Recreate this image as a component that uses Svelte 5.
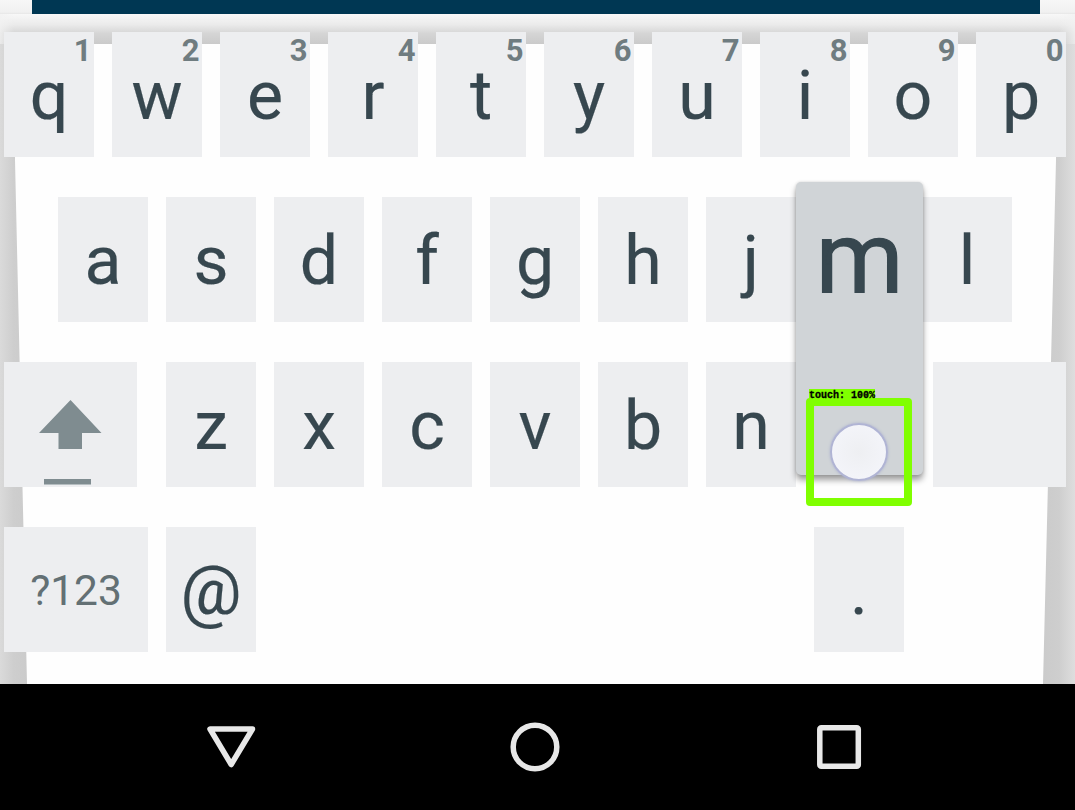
<script>
  const top = 'qwertyuiop'.split('').map((c, i) => ({ c, hint: (i + 1) % 10 }));
  const home = 'asdfghjkl'.split('');
  const lower = 'zxcvbn'.split('');
</script>

<main>
  <header><div class="bar"></div></header>
  <section class="keyboard">
    <svg class="backdrop" viewBox="0 0 1075 670" aria-hidden="true">
      <defs>
        <linearGradient id="gt" x1="0" y1="0" x2="0" y2="1">
          <stop offset="0" stop-color="#f8f8f8" /><stop offset=".35" stop-color="#ebebeb" />
          <stop offset=".65" stop-color="#d5d5d5" /><stop offset="1" stop-color="#cacaca" />
        </linearGradient>
        <linearGradient id="gl"><stop offset="0" stop-color="#dadada" /><stop offset=".5" stop-color="#cecece" /><stop offset="1" stop-color="#cbcbcb" /></linearGradient>
        <linearGradient id="gr"><stop offset="0" stop-color="#cbcbcb" /><stop offset=".5" stop-color="#cecece" /><stop offset="1" stop-color="#dedede" /></linearGradient>
        <linearGradient id="cl"><stop offset="0" stop-color="#f2f2f2" stop-opacity=".8" /><stop offset="1" stop-color="#f2f2f2" stop-opacity="0" /></linearGradient>
        <linearGradient id="cr"><stop offset="0" stop-color="#f2f2f2" stop-opacity="0" /><stop offset="1" stop-color="#f2f2f2" stop-opacity=".8" /></linearGradient>
      </defs>
      <rect width="1075" height="670" fill="#fefefe" />
      <path d="M0 20H15V146L27 670H0Z" fill="url(#gl)" />
      <path d="M1075 20H1058L1056 146L1043 670H1075Z" fill="url(#gr)" />
      <rect width="1075" height="30" fill="url(#gt)" />
      <rect width="14" height="30" fill="url(#cl)" />
      <rect x="1059" width="16" height="30" fill="url(#cr)" />
    </svg>
    <div class="row">
      {#each top as k}
        <div class="key"><span>{k.c}</span><b>{k.hint}</b></div>
      {/each}
    </div>
    <div class="row home">
      {#each home as c}
        <div class="key">
          {#if c === 'k'}
            <div class="popup"><span>m</span></div>
          {:else}<span>{c}</span>{/if}
        </div>
      {/each}
    </div>
    <div class="row">
      <div class="key shift">
        <svg viewBox="0 0 133 125"><path d="M66.500 38L97.500 71H78V87H54.500V71H35Z" /><rect x="40" y="117" width="47" height="5.500" /></svg>
      </div>
      {#each lower as c}
        <div class="key"><span>{c}</span></div>
      {/each}
      <div class="key wide">
        <div class="touch">
          <div class="tag">touch: 100%</div>
          <div class="frame"><div class="dot"></div></div>
        </div>
      </div>
    </div>
    <div class="row">
      <div class="key sym"><span>?123</span></div>
      <div class="key"><span>@</span></div>
      <div class="key period"><span>.</span></div>
    </div>
  </section>
  <nav>
    <svg viewBox="0 0 60 60"><path d="M9 12H51.500L30.200 47.500Z" stroke-linejoin="round" /></svg>
    <svg viewBox="0 0 60 60"><circle cx="30" cy="30" r="21.800" /></svg>
    <svg viewBox="0 0 60 60"><rect x="10.800" y="10.800" width="38.500" height="38.500" rx="1.500" /></svg>
  </nav>
</main>

<style>
  :global(body) { margin: 0; overflow: hidden; }
  main { width: 1075px; height: 810px; display: flex; flex-direction: column; font-family: Roboto, sans-serif; color: #37474f; overflow: hidden; }
  header { height: 14px; flex: none; padding: 0 35px 0 32px; background: linear-gradient(#f7f7f7, #f1f1f1 12px, #e6e6e6); }
  .bar { height: 14px; background: #003753; }
  .keyboard { position: relative; height: 670px; flex: none; box-sizing: border-box; padding: 18px 4px 0; display: flex; flex-direction: column; gap: 40px; }
  .backdrop { position: absolute; inset: 0; width: 1075px; height: 670px; }
  .row { display: flex; gap: 18px; height: 125px; }
  .home { padding-left: 54px; }
  .key { position: relative; flex: none; width: 90px; height: 125px; background: #edeef0; text-align: center; font-size: 68px; line-height: 128px; -webkit-text-stroke: 0.2px currentColor; }
  .key b { position: absolute; right: 2.5px; top: 0; font-size: 31px; line-height: 38px; color: #6f7c80; -webkit-text-stroke: 0; }
  .shift { width: 133px; margin-right: 11px; }
  .shift svg { display: block; width: 133px; height: 125px; fill: #7f8c90; }
  .wide { width: 133px; margin-left: 119px; }
  .sym { width: 144px; font-size: 42.500px; line-height: 127px; color: #637074; -webkit-text-stroke: 0; }
  .period { margin-left: 540px; }
  .popup { position: absolute; z-index: 2; left: -18px; top: -15px; width: 127px; height: 293px; border-radius: 5px; background: #d0d4d7; box-shadow: 0 5px 6px rgba(0,0,0,.38), 0 0 3px rgba(0,0,0,.15); font-size: 100px; line-height: 154px; -webkit-text-stroke: 1.2px currentColor; }
  .touch { position: absolute; z-index: 3; left: -127px; top: 27px; width: 105px; }
  .tag { width: 66px; height: 10px; margin-left: 3px; background: #80ff00; color: #000; font: bold 10px/14px "Liberation Mono", monospace; white-space: pre; -webkit-text-stroke: 0.3px #000; }
  .frame { box-sizing: border-box; width: 106px; height: 108px; margin-top: -1px; border: 8px solid #80ff00; border-radius: 4px; display: flex; justify-content: center; padding-top: 17px; }
  .dot { box-sizing: border-box; width: 58px; height: 58px; border-radius: 50%; background: radial-gradient(#eeeff2, #f3f4f9 70%); border: 2px solid #b0b4d4; box-shadow: 0 0 3px #aab0ce; }
  nav { height: 126px; flex: none; box-sizing: border-box; padding-right: 5px; background: #000; display: flex; align-items: center; justify-content: center; gap: 244px; }
  nav svg { width: 60px; height: 60px; fill: none; stroke: #e8e8e8; stroke-width: 5.500px; }
</style>
